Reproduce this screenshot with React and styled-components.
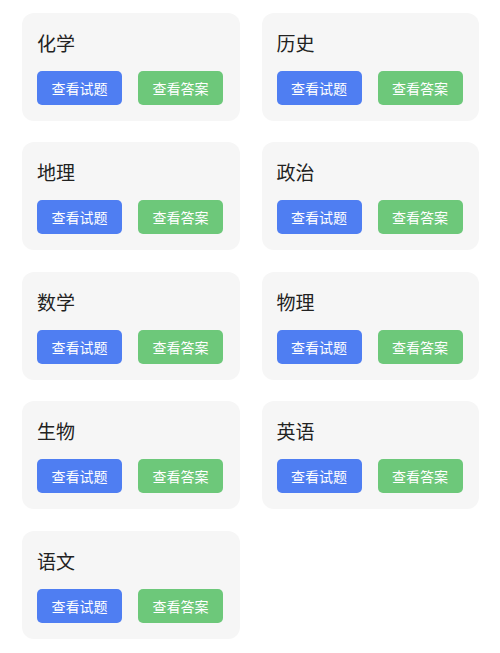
import React from "react";
import styled, { createGlobalStyle } from "styled-components";

const GlobalStyle = createGlobalStyle`
  body {
    margin: 0;
    background: #ffffff;
    font-family: "Noto Sans CJK SC", "Noto Sans", sans-serif;
  }
`;

const subjects = ["化学", "历史", "地理", "政治", "数学", "物理", "生物", "英语", "语文"];

export default function App() {
  return (
    <>
      <GlobalStyle />
      <Grid>
        {subjects.map((name) => (
          <Card key={name}>
            <Title>{name}</Title>
            <Actions>
              <ActionButton color="#4f7ef2">查看试题</ActionButton>
              <ActionButton color="#6dc87a">查看答案</ActionButton>
            </Actions>
          </Card>
        ))}
      </Grid>
    </>
  );
}

const Grid = styled.div`
  display: grid;
  grid-template-columns: 1fr 1fr;
  column-gap: 22px;
  row-gap: 21.4px;
  padding: 13px 21px 0 22px;
`;

const Card = styled.div`
  background: #f6f6f6;
  border-radius: 12px;
  padding: 18px 15px 16px;
  height: 108px;
  box-sizing: border-box;
`;

const Title = styled.h3`
  margin: 0 0 16px;
  font-size: 19px;
  line-height: 24px;
  font-weight: 400;
  color: #222222;
`;

const Actions = styled.div`
  display: flex;
  gap: 16px;
`;

const ActionButton = styled.button`
  width: 85px;
  height: 34px;
  border: 0;
  outline: none;
  padding: 0;
  border-radius: 5px;
  background: ${(p) => p.color};
  color: #ffffff;
  font-family: inherit;
  font-size: 14px;
  cursor: pointer;
`;
